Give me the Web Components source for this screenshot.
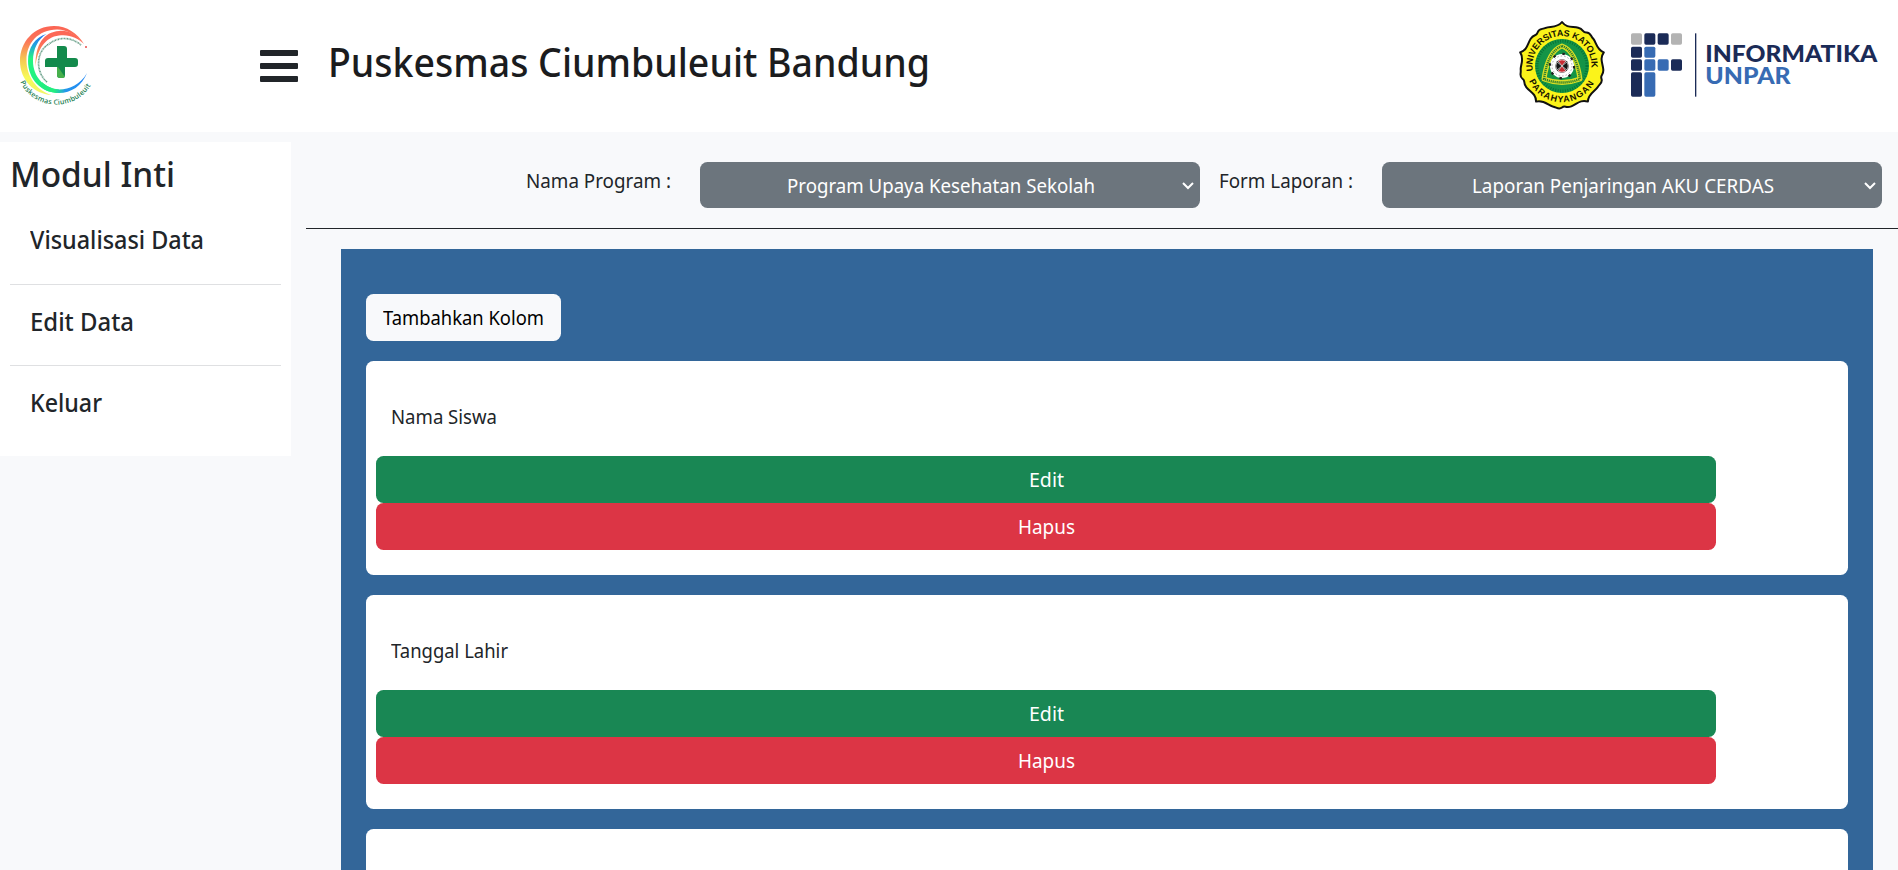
<!DOCTYPE html>
<html lang="id">
<head>
<meta charset="utf-8">
<title>Puskesmas Ciumbuleuit Bandung</title>
<style>
body{margin:0;height:870px;overflow:hidden;background:#f8f9fb;color:#212529;font:20px/30px "Noto Sans","Open Sans",sans-serif}
</style>
</head>
<body>
<puskesmas-app></puskesmas-app>
<script>
const define = (name, html, setup) => customElements.define(name, class extends HTMLElement {
  constructor(){
    super();
    const t = document.createElement('template');
    t.innerHTML = html;
    this.attachShadow({mode:'open'}).append(t.content.cloneNode(true));
  }
  connectedCallback(){ if(setup) setup.call(this, this.shadowRoot); }
});

define('puskesmas-app', `
<style>
:host{display:block;height:870px;overflow:hidden}
.body{display:grid;grid-template-columns:291px 1592px;column-gap:15px;align-items:start}
side-menu{margin-top:10px}
.cards{box-sizing:border-box;margin:20px 25px 0 35px;padding:45px 25px 0;background:#336699;height:621px;overflow:hidden;display:flex;flex-direction:column;gap:20px}
</style>
<top-bar></top-bar>
<div class="body">
  <side-menu></side-menu>
  <main>
    <filter-bar></filter-bar>
    <div class="cards">
      <light-button><fit-text w="161">Tambahkan Kolom</fit-text></light-button>
      <column-card>
        <fit-text w="106">Nama Siswa</fit-text>
        <action-button slot="actions"><fit-text w="35">Edit</fit-text></action-button>
        <action-button slot="actions" danger><fit-text w="57">Hapus</fit-text></action-button>
      </column-card>
      <column-card>
        <fit-text w="117">Tanggal Lahir</fit-text>
        <action-button slot="actions"><fit-text w="35">Edit</fit-text></action-button>
        <action-button slot="actions" danger><fit-text w="57">Hapus</fit-text></action-button>
      </column-card>
      <column-card></column-card>
    </div>
  </main>
</div>`);

define('top-bar', `
<style>
:host{display:flex;height:132px;background:#fff;box-sizing:border-box;padding-left:15px}
h1{margin:37px 0 0 30px;font-size:39px;line-height:50px;font-weight:500;color:#1b1c1e}
menu-icon{margin:50px 0 0 165px}
puskesmas-logo{margin-top:20px}
unpar-seal{margin:20px 0 0 auto}
informatika-logo{margin:20px 20px 0 21px}
</style>
<puskesmas-logo></puskesmas-logo>
<menu-icon></menu-icon>
<h1><fit-text w="602">Puskesmas Ciumbuleuit Bandung</fit-text></h1>
<unpar-seal></unpar-seal>
<informatika-logo></informatika-logo>`);

define('menu-icon', `
<style>:host{display:block;width:38px;height:32px}svg{display:block}</style>
<svg width="38" height="32" fill="#212529"><rect width="38" height="6" rx="1"/><rect y="13" width="38" height="6" rx="1"/><rect y="26" width="38" height="6" rx="1"/></svg>`);

define('puskesmas-logo', `
<style>:host{display:block;width:80px;height:90px}svg{display:block}text{font:600 7px "Open Sans",sans-serif;fill:#1c8052}</style>
<svg width="80" height="90" viewBox="15 20 80 90">
<defs>
<linearGradient id="a" x1="0" y1="0" x2="0" y2="1"><stop offset="0" stop-color="#fb6454"/><stop offset=".22" stop-color="#fb7659"/><stop offset=".5" stop-color="#f6cb52"/><stop offset=".75" stop-color="#f7fa59"/><stop offset="1" stop-color="#f3f56b"/></linearGradient>
<linearGradient id="b" x1="0" y1="0" x2="0" y2="1"><stop offset="0" stop-color="#236fee"/><stop offset=".18" stop-color="#239fe0"/><stop offset=".42" stop-color="#23f580"/><stop offset="1" stop-color="#23ee80"/></linearGradient>
<linearGradient id="c" x1="0" x2="1"><stop offset=".3" stop-color="#23ee80"/><stop offset=".55" stop-color="#2496ec"/><stop offset="1" stop-color="#2288f5"/></linearGradient>
<linearGradient id="d" x1="0" y1="0" x2="0" y2="1"><stop offset=".3" stop-color="#fc6957"/><stop offset="1" stop-color="#f8b45c"/></linearGradient>
<path id="p" d="M20.2 82 A39.5 38 0 0 0 92 83"/>
</defs>
<path fill="url(#a)" d="M84 44 C77 33 67 26 54 26 C34 26 20 42 20 61 C20 80 34 94 51.500 95 C36 90 26.500 76 26.500 60 C26.500 43 38 30 57 29.500 C68 29.500 77 36 84 44Z"/>
<path fill="url(#b)" d="M46.500 34 C35 37 28 48 28 61 C28 79 41 93 59 93 L59 89.500 C43 88 33 76 33 61 C33 49 38 39 46.500 34Z"/>
<path fill="url(#c)" d="M40 86 C45 91 52 93 59 93 C71 93 82 86 87 73 C80 85 70 89 59 89.500 C53 89.500 46 86 42 82Z"/>
<path fill="url(#d)" d="M84 44 C76 34 68 30 59 31 C44 32 35 44 35.500 67 C37 50 45 37 59 35.500 C69 34 78 38 84 44Z"/>
<circle cx="86" cy="47" r="1" fill="#e74d4b"/>
<path d="M47 82 C35 72 36 51 49 44 C58 37 70 36 81 45" fill="none" stroke="#3d8567" stroke-width="1.700" stroke-dasharray="1.200 .6 .7 .5" opacity=".8"/>
<path fill="#138a4c" d="M57 46H64Q67 46 67 49V58H75Q78 58 78 61V64Q78 67 75 67H65V75Q65 78 62 78H60Q57 78 57 75V67H45V61Q45 58 48 58H57Z"/>
<path fill="#47b04c" d="M58 67 65 77Q64 78 62 78H60Q57 78 57 75V67Z"/>
<text textLength="86" lengthAdjust="spacing"><textPath href="#p">Puskesmas Ciumbuleuit</textPath></text>
</svg>`);

define('unpar-seal', `
<style>:host{display:block;width:90px;height:92px}svg{display:block}text{font:700 9px "Liberation Sans",sans-serif;fill:#171400}</style>
<svg width="90" height="92" viewBox="-45 -46 90 92">
<defs><path id="u" d="M-29 5 A29.500 29.500 0 1 1 29 5"/><path id="l" d="M-33 15 A36.300 36.300 0 0 0 33 15"/></defs>
<path id="flower" fill="#fbf31a" stroke="#111" stroke-width="2" stroke-linejoin="round"/>
<circle r="27" fill="#149447"/>
<circle r="25" fill="none" stroke="#087338" stroke-width="3" stroke-dasharray="1 1.500"/>
<path fill="none" stroke="#d9df25" stroke-width="5" stroke-linejoin="round" d="M0-20 Q14-15 18 13 Q0 20-18 13 Q-14-15 0-20Z"/>
<path fill="none" stroke="#287b31" stroke-width="2.400" stroke-dasharray="1.200 .8" d="M0-20 Q14-15 18 13 Q0 20-18 13 Q-14-15 0-20Z"/>
<circle r="12" fill="#fff" stroke="#222" stroke-width="2.500" stroke-dasharray="2.500 6.925"/>
<circle r="11" fill="#fff"/><circle r="10" fill="none" stroke="#aaa" stroke-width="1" stroke-dasharray="1.500 2"/><circle r="6.700" fill="#151515"/>
<path fill="#c72c34" stroke="#fff" stroke-width=".6" d="M0 0-4-5Q0-7.500 4-5ZM0 0-4 5Q0 7.500 4 5Z"/>
<path fill="#151515" stroke="#fff" stroke-width=".6" d="M0 0-5-4Q-7.500 0-5 4ZM0 0 5-4Q7.500 0 5 4Z"/>
<text textLength="100"><textPath href="#u">UNIVERSITAS KATOLIK</textPath></text>
<text textLength="80"><textPath href="#l">PARAHYANGAN</textPath></text>
</svg>`, function(r){
  /* Five pointed tips with a rounded lobe between each pair. */
  const n = 5, pt = (a, d) => (Math.sin(a)*d).toFixed(1)+' '+(-Math.cos(a)*d).toFixed(1), s = 2*Math.PI/n;
  let d = 'M'+pt(0,44);
  for(let i=0;i<n;i++) d += 'C'+pt(s*(i+.1),38)+' '+pt(s*(i+.2),41)+' '+pt(s*(i+.32),41.5)+'S'+pt(s*(i+.43),39)+' '+pt(s*(i+.5),41.5)+'S'+pt(s*(i+.6),41.5)+' '+pt(s*(i+.68),41.5)+'S'+pt(s*(i+.9),38)+' '+pt(s*(i+1),44);
  r.getElementById('flower').setAttribute('d', d+'Z');
});

define('informatika-logo', `
<style>:host{display:block;width:250px;height:90px}svg{display:block}text{font-family:Lato,sans-serif;font-weight:900;font-size:69px}</style>
<svg width="250" height="90" viewBox="54 30 750 270">
<g fill="#b3b3b3"><rect x="63" y="70" width="33" height="34" rx="5"/><rect x="183" y="70" width="33" height="34" rx="5"/></g>
<g fill="#1b2b57"><rect x="103" y="70" width="33" height="34" rx="5"/><rect x="143" y="70" width="33" height="34" rx="5"/><rect x="63" y="110" width="33" height="33" rx="5"/><rect x="63" y="148" width="33" height="34" rx="5"/><rect x="183" y="148" width="33" height="34" rx="5"/><rect x="63" y="187" width="33" height="73" rx="5"/><rect x="255" y="70" width="4" height="190"/></g>
<g fill="#376bb3"><rect x="103" y="110" width="33" height="33" rx="5"/><rect x="103" y="148" width="33" height="34" rx="5"/><rect x="143" y="148" width="33" height="34" rx="5"/><rect x="103" y="187" width="33" height="73" rx="5"/></g>
<text x="286" y="156" fill="#1b2b57" textLength="516" lengthAdjust="spacingAndGlyphs">INFORMATIKA</text>
<text x="286" y="223" fill="#376bb3" textLength="256" lengthAdjust="spacingAndGlyphs">UNPAR</text>
</svg>`);

define('side-menu', `
<style>
:host{display:block;height:314px;background:#fff;padding:0 10px;box-sizing:border-box;font-weight:500}
h2{margin:0;padding-top:11px;font-size:35px;line-height:42px;font-weight:500}
div{font-size:25px;line-height:30px;box-sizing:border-box;height:81px;padding:21px 0 0 20px;border-bottom:1px solid #dfe0e2}
div:first-of-type{height:90px;padding-top:29px}
div:last-of-type{border:0}
</style>
<h2><fit-text w="165">Modul Inti</fit-text></h2>
<div><fit-text w="174">Visualisasi Data</fit-text></div>
<div><fit-text w="104">Edit Data</fit-text></div>
<div><fit-text w="72">Keluar</fit-text></div>`);

define('filter-bar', `
<style>
:host{display:flex;height:97px;box-sizing:border-box;border-bottom:1px solid #212529;padding:30px 16px 0 0;justify-content:flex-end}
label{margin:4px 29px 0 0}
program-select + label{margin-left:19px}
</style>
<label><fit-text w="145">Nama Program :</fit-text></label>
<program-select><fit-text w="308">Program Upaya Kesehatan Sekolah</fit-text></program-select>
<label><fit-text w="134">Form Laporan :</fit-text></label>
<program-select><fit-text w="302">Laporan Penjaringan AKU CERDAS</fit-text></program-select>`);

define('program-select', `
<style>
:host{display:flex;flex:none;width:500px;height:46px;border-radius:7.5px;background:#6c757d;color:#fff;align-items:center;box-sizing:border-box;padding:1px 6px 0 0}
span{flex:1;text-align:center;line-height:30px;margin-bottom:-1px}
</style>
<span><slot></slot></span>
<svg width="12" height="8" fill="none" stroke="#fff" stroke-width="2"><path d="M1 1 6 6 11 1"/></svg>`);

define('light-button', `
<style>:host{display:block;flex:none;align-self:flex-start;width:195px;height:47px;line-height:47px;border-radius:7.5px;background:#f8f9fb;text-align:center;color:#000}</style>
<slot></slot>`);

define('action-button', `
<style>:host{display:block;height:47px;line-height:47px;border-radius:7.5px;color:#fff;text-align:center;background:#198754}:host([danger]){background:#dc3545}</style>
<slot></slot>`);

define('column-card', `
<style>
:host{display:block;flex:none;height:214px;box-sizing:border-box;border-radius:7.500px;background:#fff;padding:41px 132px 0 10px}
p{margin:0 0 24px 15px;height:30px}
</style>
<p><slot></slot></p>
<slot name="actions"></slot>`);

/* Inline text condensed or widened to a set width. */
define('fit-text', `<style>:host{display:inline-block;text-align:left;white-space:nowrap}span{display:inline-block;transform-origin:0 50%}</style><span><slot></slot></span>`, function(r){
  const w = +this.getAttribute('w'), s = r.querySelector('span');
  const natural = s.getBoundingClientRect().width;
  this.style.width = w+'px';
  s.style.transform = 'scaleX('+(w/natural).toFixed(4)+')';
});
</script>
</body>
</html>
